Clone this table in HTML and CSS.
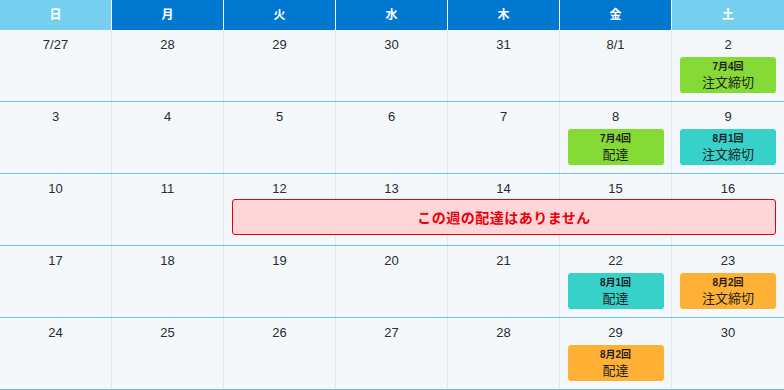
FILE: index.html
```html
<!DOCTYPE html>
<html lang="ja">

<head>
    <meta charset="UTF-8">
    <meta name="viewport" content="width=device-width, initial-scale=1.0">
    <title>配達カレンダー</title>
    <link rel="stylesheet" href="styles.css">
</head>

<body>
    <div class="calendar">
        <!-- 曜日 -->
        <div class="week-head">
            <div class="head weekend">日</div>
            <div class="head">月</div>
            <div class="head">火</div>
            <div class="head">水</div>
            <div class="head">木</div>
            <div class="head">金</div>
            <div class="head weekend">土</div>
        </div>

        <div class="week">
            <div class="day"><span class="date">7/27</span></div>
            <div class="day"><span class="date">28</span></div>
            <div class="day"><span class="date">29</span></div>
            <div class="day"><span class="date">30</span></div>
            <div class="day"><span class="date">31</span></div>
            <div class="day"><span class="date">8/1</span></div>
            <div class="day"><span class="date">2</span>
                <div class="badge green"><b>7月4回</b><span>注文締切</span></div>
            </div>
        </div>

        <div class="week">
            <div class="day"><span class="date">3</span></div>
            <div class="day"><span class="date">4</span></div>
            <div class="day"><span class="date">5</span></div>
            <div class="day"><span class="date">6</span></div>
            <div class="day"><span class="date">7</span></div>
            <div class="day"><span class="date">8</span>
                <div class="badge green"><b>7月4回</b><span>配達</span></div>
            </div>
            <div class="day"><span class="date">9</span>
                <div class="badge teal"><b>8月1回</b><span>注文締切</span></div>
            </div>
        </div>

        <div class="week">
            <div class="day"><span class="date">10</span></div>
            <div class="day"><span class="date">11</span></div>
            <div class="day"><span class="date">12</span></div>
            <div class="day"><span class="date">13</span></div>
            <div class="day"><span class="date">14</span></div>
            <div class="day"><span class="date">15</span></div>
            <div class="day"><span class="date">16</span></div>
            <div class="notice">この週の配達はありません</div>
        </div>

        <div class="week">
            <div class="day"><span class="date">17</span></div>
            <div class="day"><span class="date">18</span></div>
            <div class="day"><span class="date">19</span></div>
            <div class="day"><span class="date">20</span></div>
            <div class="day"><span class="date">21</span></div>
            <div class="day"><span class="date">22</span>
                <div class="badge teal"><b>8月1回</b><span>配達</span></div>
            </div>
            <div class="day"><span class="date">23</span>
                <div class="badge orange"><b>8月2回</b><span>注文締切</span></div>
            </div>
        </div>

        <div class="week">
            <div class="day"><span class="date">24</span></div>
            <div class="day"><span class="date">25</span></div>
            <div class="day"><span class="date">26</span></div>
            <div class="day"><span class="date">27</span></div>
            <div class="day"><span class="date">28</span></div>
            <div class="day"><span class="date">29</span>
                <div class="badge orange"><b>8月2回</b><span>配達</span></div>
            </div>
            <div class="day"><span class="date">30</span></div>
        </div>
    </div>
</body>

</html>
```

FILE: styles.css
```css
body {
    margin: 0;
    font-family: "Liberation Sans", "Noto Sans CJK JP", sans-serif;
    background: #f4f8fb;
    color: #333;
}

.calendar {
    width: 784px;
}

.week-head,
.week {
    display: grid;
    grid-template-columns: repeat(7, 112px);
}

.head {
    height: 30px;
    line-height: 30px;
    text-align: center;
    font-size: 12px;
    font-weight: bold;
    color: #fff;
    background: #0078cf;
    border-right: 1px solid #fff;
}

.head:last-child {
    border-right: none;
}

.head.weekend {
    background: #77cff0;
}

.week {
    height: 71px;
    border-bottom: 1px solid #68c4ec;
}

.day {
    grid-row: 1;
    display: flex;
    flex-direction: column;
    align-items: center;
    border-right: 1px solid #dde9ef;
}

/* 曜日ごとの列を固定（お知らせ帯と重ねるため） */
.day:nth-child(1) { grid-column: 1; }
.day:nth-child(2) { grid-column: 2; }
.day:nth-child(3) { grid-column: 3; }
.day:nth-child(4) { grid-column: 4; }
.day:nth-child(5) { grid-column: 5; }
.day:nth-child(6) { grid-column: 6; }
.day:nth-child(7) { grid-column: 7; border-right: none; }

.date {
    margin-top: 6px;
    font-size: 13px;
    line-height: 18px;
    color: #2b2b2b;
}

.badge {
    display: flex;
    flex-direction: column;
    align-items: center;
    box-sizing: border-box;
    width: 96px;
    height: 36px;
    margin-top: 3px;
    padding-top: 3px;
    border-radius: 3px;
    color: #1e1e1e;
}

.badge b {
    font-size: 10px;
    line-height: 13px;
}

.badge span {
    font-family: "Noto Sans CJK JP", sans-serif;
    font-size: 13px;
    line-height: 17px;
}

.green {
    background: #86da36;
}

.teal {
    background: #38d1ca;
}

.orange {
    background: #ffb135;
}

/* 配達なしの週 */
.notice {
    grid-row: 1;
    grid-column: 3 / 8;
    align-self: start;
    margin: 25px 8px 0;
    height: 36px;
    line-height: 34px;
    box-sizing: border-box;
    border: 1px solid #e8000b;
    border-radius: 3px;
    background: #ffd6d7;
    color: #e8000b;
    text-align: center;
    font-family: "Noto Sans CJK JP", sans-serif;
    font-size: 14px;
    font-weight: bold;
    letter-spacing: 0.5px;
}
```
